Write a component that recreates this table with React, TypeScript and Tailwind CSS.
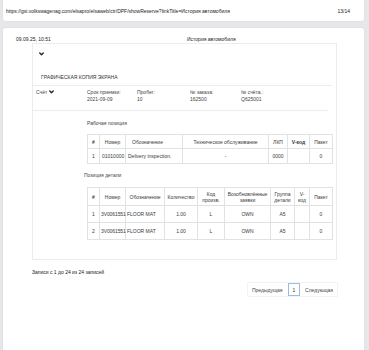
import React from 'react';

const Chevron = ({ className = '' }: { className?: string }) => (
  <svg viewBox="0 0 10 7" className={className} fill="none" stroke="#1f1f1f" strokeWidth="2.6" strokeLinecap="round" strokeLinejoin="round">
    <path d="M1.5 1.5 L5 5 L8.5 1.5" />
  </svg>
);

const fields = [
  { label: 'Срок приемки:', value: '2021-09-09', w: 'w-[50px]' },
  { label: 'Пробег:', value: '10', w: 'w-[53px]' },
  { label: '№ заказа:', value: '162500', w: 'w-[51px]' },
  { label: '№ счёта.:', value: 'Q625001', w: 'w-[50px]' },
];

const th = 'border border-[#e2e2e2] font-normal text-[#3a3a3a] text-center align-middle px-[1px]';
const td = 'border border-[#e2e2e2] text-[#3a3a3a] text-center align-middle whitespace-nowrap px-[1px]';

const WorkTable = () => (
  <table className="table-fixed border-collapse w-[245px] text-[5px] leading-[6px]">
    <colgroup>
      <col className="w-[12px]" />
      <col className="w-[26px]" />
      <col className="w-[57px]" />
      <col className="w-[86px]" />
      <col className="w-[19px]" />
      <col className="w-[22px]" />
      <col className="w-[23px]" />
    </colgroup>
    <thead>
      <tr className="h-[14px]">
        <th className={`${th} !font-bold`}>#</th>
        <th className={th}>Номер</th>
        <th className={`${th} !text-left !pl-[6px]`}>Обозначение</th>
        <th className={th}>Техническое обслуживание</th>
        <th className={th}>ЛКП</th>
        <th className={`${th} !font-semibold`}>V-код</th>
        <th className={th}>Пакет</th>
      </tr>
    </thead>
    <tbody>
      <tr className="h-[15px]">
        <td className={td}>1</td>
        <td className={`${td} !text-left !pl-[2px] !pr-0`}>01010000</td>
        <td className={`${td} !text-left !pl-[2px]`}>Delivery inspection.</td>
        <td className={td}>-</td>
        <td className={td}>0000</td>
        <td className={td}></td>
        <td className={td}>0</td>
      </tr>
    </tbody>
  </table>
);

const PartsTable = () => (
  <table className="table-fixed border-collapse w-[245px] text-[5px] leading-[6px]">
    <colgroup>
      <col className="w-[12px]" />
      <col className="w-[26px]" />
      <col className="w-[39px]" />
      <col className="w-[33px]" />
      <col className="w-[27px]" />
      <col className="w-[46px]" />
      <col className="w-[24px]" />
      <col className="w-[15px]" />
      <col className="w-[23px]" />
    </colgroup>
    <thead>
      <tr className="h-[18px]">
        <th className={`${th} !font-bold`}>#</th>
        <th className={th}>Номер</th>
        <th className={th}>Обозначение</th>
        <th className={th}>Количество</th>
        <th className={th}>Код произв.</th>
        <th className={th}>Возобновлённые заявки</th>
        <th className={th}>Группа детали</th>
        <th className={th}>V-код</th>
        <th className={th}>Пакет</th>
      </tr>
    </thead>
    <tbody>
      {[1, 2].map((n) => (
        <tr key={n} className="h-[17px]">
          <td className={td}>{n}</td>
          <td className={`${td} !text-left !pl-[1px] !pr-0 tracking-[-0.1px]`}>3V0061551</td>
          <td className={`${td} !text-left !pl-[1px]`}>FLOOR MAT</td>
          <td className={td}>1.00</td>
          <td className={td}>L</td>
          <td className={td}>OWN</td>
          <td className={td}>A5</td>
          <td className={td}></td>
          <td className={td}>0</td>
        </tr>
      ))}
    </tbody>
  </table>
);

export default function App() {
  return (
    <div className="min-h-screen bg-[#e7e7ea] pl-[3px] font-['Liberation_Sans',Arial,sans-serif] text-[#222] overflow-hidden">
      <div className="w-[361px] h-[21px] bg-white rounded-b-[3px] shadow-[0_0_2px_rgba(0,0,0,0.08)] flex items-center justify-between pl-[3px] pr-[14px] text-[5px] leading-[6px]">
        <span>https://gsi.volkswagenag.com/elsapro/elsaweb/ctr/DPF/showReserve?linkTitle=История автомобиля</span>
        <span>13/14</span>
      </div>

      <div className="mt-[7px] w-[361px] h-[330px] bg-white rounded-t-[3px] shadow-[0_0_2px_rgba(0,0,0,0.08)]">
        <div className="h-[15px] pt-[8px] flex text-[5px] leading-[6px]">
          <span className="w-[184px] pl-[13px]">09.09.25, 10:51</span>
          <span>История автомобиля</span>
        </div>

        <div className="ml-[29px] w-[305px] h-[217px] border border-[#ececec]">
          <div className="h-[14px] pt-[8px] pl-[6px]">
            <Chevron className="w-[5px] h-[4px]" />
          </div>
          <div className="h-[27px] flex items-end pb-[5px] pl-[8px] text-[5px] leading-[6px] text-[#333]">
            ГРАФИЧЕСКАЯ КОПИЯ ЭКРАНА
          </div>
          <div className="mr-[4px] border-t border-[#ececec] h-[25px] flex pt-[3px] text-[5px] leading-[6.5px] text-[#444]">
            <div className="w-[54px] pl-[3px] flex items-start gap-[2px]">
              <span>Счёт</span>
              <Chevron className="w-[5px] h-[4px] mt-[1px]" />
            </div>
            {fields.map((f) => (
              <div key={f.label} className={`${f.w} flex flex-col`}>
                <span>{f.label}</span>
                <span>{f.value}</span>
              </div>
            ))}
          </div>
          <div className="mr-[8px] border-t border-[#ececec] pl-[54px] pt-[9px] text-[5px] leading-[6px] text-[#444]">
            <div>Рабочая позиция</div>
            <div className="mt-[8px]">
              <WorkTable />
            </div>
            <div className="mt-[8px] -ml-[3px]">Позиция детали</div>
            <div className="mt-[9px]">
              <PartsTable />
            </div>
          </div>
        </div>

        <div className="ml-[29px] mt-[9px] text-[5px] leading-[6px] text-[#222]">Записи с 1 до 24 из 24 записей</div>

        <div className="ml-[244px] mt-[7px] w-[91px] h-[15px] flex items-center justify-between px-[4px] border border-[#f3f3f3] rounded-[1px] text-[5px] leading-[6px] text-[#444]">
          <span>Предыдущая</span>
          <span className="w-[12px] h-[13px] border border-[#9cbde0] flex items-center justify-center text-[#333]">1</span>
          <span>Следующая</span>
        </div>
      </div>
    </div>
  );
}
